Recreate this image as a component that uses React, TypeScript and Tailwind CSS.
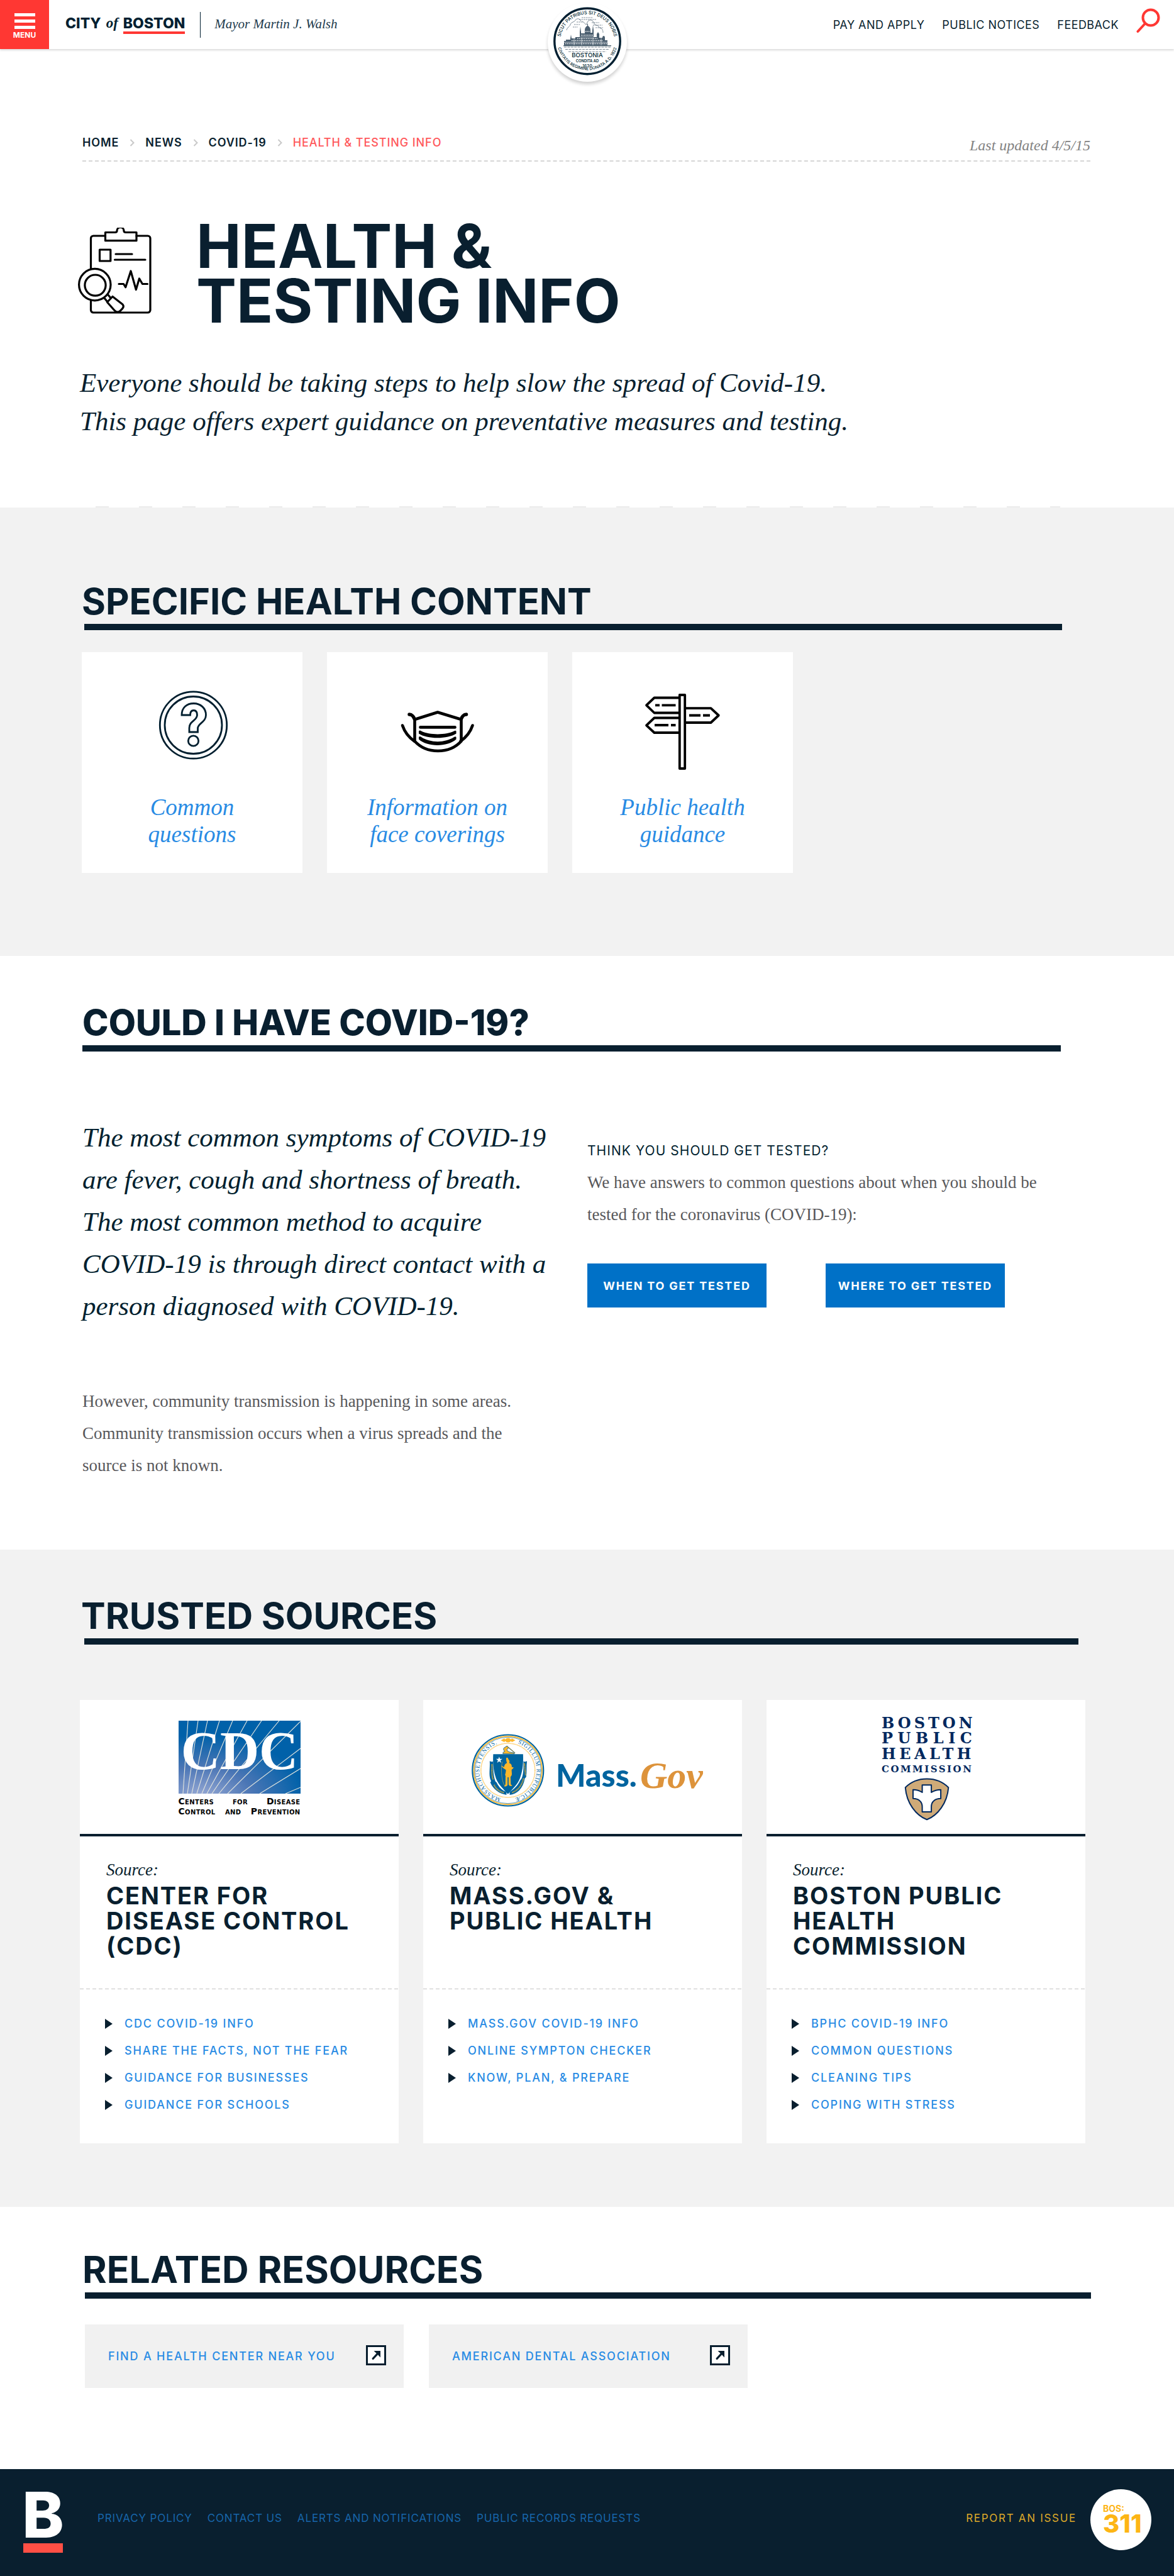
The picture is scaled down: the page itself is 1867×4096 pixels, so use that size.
import type { ReactNode } from "react";

const sans = "font-['Inter',sans-serif]";
const serif = "font-['Liberation_Serif',serif]";

/* ---------- Icons and logos ---------- */

function SearchIcon() {
  return (
    <svg viewBox="0 0 38 40" className="h-10 w-[38px]" fill="none" stroke="#ff3733" aria-hidden="true">
      <circle cx="23" cy="15" r="12.5" strokeWidth="4" />
      <path d="M13.5 25 2.5 37" strokeWidth="4" strokeLinecap="round" />
    </svg>
  );
}

function CitySeal() {
  return (
    <svg viewBox="0 0 126 126" className="size-[126px]" aria-label="City of Boston seal" role="img">
      <defs>
        <path id="sealTop" d="M20 61.5a43 43 0 0 1 86 0" />
        <path id="sealBottom" d="M14.5 59a48.5 48.5 0 0 0 97 0" />
      </defs>
      <circle cx="63" cy="61.5" r="52.2" fill="#fff" stroke="#011f31" strokeWidth="3.4" />
      <g fill="#011f31" fontFamily="Inter, sans-serif" fontWeight="500" textAnchor="middle">
        <text fontSize="7.4">
          <textPath href="#sealTop" startOffset="50%">SICUT PATRIBUS SIT DEUS NOBIS</textPath>
        </text>
        <text fontSize="6.6">
          <textPath href="#sealBottom" startOffset="50%">CIVITATIS REGIMINE DONATA A.D. 1822</textPath>
        </text>
        <text x="63" y="87" fontSize="9.5">BOSTONIA</text>
        <text x="63" y="94.500" fontSize="5.800" fontWeight="600">CONDITA AD</text>
        <text x="63" y="102.500" fontSize="6.600">1630</text>
      </g>
      <g fill="none" stroke="#5b6d7c" strokeWidth="0.8">
        <path d="M30 44c1-5 5-5 6-9 2-5 6-3 8-7 3-4 8-2 9 2M55 30c3 1 4 5 7 5 1-6 5-9 9-6 3 2 2 6 6 7 4 0 4 4 7 5 3 0 4 4 4 7" />
        <path d="M54 24h18M50 27h27M46 31h10M70 32h12M42 35h9M72 36h15M40 39h8M76 40h12" strokeDasharray="2.5 1" />
        <path d="M26 71h74M28 74.5h70M33 78h60" strokeDasharray="4 1.4" />
      </g>
      <g fill="#4a5e6f">
        <path d="M51 55V47l1-9 1 9v2h6v-5c0-4 2-6 4-7v-3h1v3c2 1 4 3 4 7v4h3v-4l1-8 1 8v11z" />
        <path d="M36 61v-4l1-6 1 6h6v-2h34v-5l2-3 2 3v6h5c0-4 4-4 4 0v4h4v8H26v-7h3v-2h7z" />
      </g>
      <g stroke="#fff" strokeWidth="1.300" fill="none">
        <path d="M28 65.500h70M38 60.500h50M47 57.300h32" strokeDasharray="1.500 1.300" />
        <path d="M53 52h20M60 46h7" strokeDasharray="1.300 1.200" />
        <path d="M26 63.200h72M52 54.800h22" strokeWidth="0.600" />
        <path d="M42 57v11M54 56v12M72 56v12M85 56v12" strokeWidth="0.600" />
      </g>
      <path d="M25 68.800h76" stroke="#011f31" strokeWidth="1" />
    </svg>
  );
}

function ClipboardIcon() {
  return (
    <svg
      viewBox="0 0 117 137"
      className="mt-[14px] h-[137px] w-[117px] shrink-0"
      fill="none"
      stroke="#000"
      strokeWidth="3.2"
      strokeLinecap="round"
      strokeLinejoin="round"
      aria-hidden="true"
    >
      <path d="M43 13H24.500a4 4 0 0 0-4 4v48M20.500 116v15a4 4 0 0 0 4 4H111a4 4 0 0 0 4-4V17a4 4 0 0 0-4-4H93" />
      <path d="M43.500 7.500H59c2 0 3-1 3-2.500a5.500 5.500 0 0 1 11 0c0 1.500 1 2.500 3 2.500h17v13.200H43.500z" />
      <path d="M34.500 35h17.300v18H34.500zM60 42h26M58.500 51H107" />
      <path d="M65 89.500h7.500l3.200 5.200L84 69l8.300 29.500 5.200-17.500 5 8.500h8" />
      <circle cx="26.800" cy="90.600" r="25.200" />
      <circle cx="27.500" cy="91.600" r="16.600" />
      <path d="m48 107 4.500 5.200M42 112l4.500 5.500M55 109.500 46.500 118.500 58 131.500c3 3.600 6.500 3.200 9 1 4.500-4 7-7 4-10.500z" />
    </svg>
  );
}

function QuestionIcon() {
  return (
    <svg viewBox="0 0 130 130" className="size-[130px]" fill="none" stroke="#011f2f" strokeWidth="2.800" aria-hidden="true">
      <circle cx="66.500" cy="56" r="53.200" />
      <circle cx="66.500" cy="56" r="45.500" />
      <path d="M48 40c0-12 8-18.500 19-18.500S86.500 29 86.500 40C86.500 51.500 73.500 53 73.500 61v6H60v-6.500C60 49 72.500 49 72.500 40c0-5.500-2.500-7.500-5.500-7.500-4 0-5.500 3-5.500 7.500z" />
      <circle cx="66.500" cy="81" r="8.200" />
    </svg>
  );
}

function MaskIcon() {
  return (
    <svg viewBox="0 0 130 130" className="size-[130px]" aria-hidden="true">
      <g fill="none" stroke="#000" strokeWidth="4.600" strokeLinecap="round" strokeLinejoin="round">
        <path d="M28.500 47 65 35.500 102.500 47v34.500C93 92 81 97 65.500 97S38 92 28.500 81.500z" />
        <path d="M28 46c-1-3-4-7-8-7M102.500 46c1-3 4-7 8-7" strokeWidth="5.500" />
        <path d="M9 56.500c3 9 9 18 19 25M120.500 56.500c-3 9-9 18-19 25" />
        <path d="M37.500 59.400h55" />
      </g>
      <path d="M35 65.500c1-1.500 3-1 4 0 14 6.500 38 6.500 52 0 1.500-1 3-1 3.500 0v4C81 78.500 48 78.500 35 69.500zM35 75c1-1.500 3-1 4 0 14 9.500 38 9.500 52 0 1.500-1 3-1 3.500 0v3.500C81 91 48 91 35 78.500z" />
    </svg>
  );
}

function SignpostIcon() {
  return (
    <svg viewBox="0 0 130 130" className="size-[130px]" fill="none" stroke="#000" strokeWidth="3.800" aria-hidden="true">
      <path d="M59 12.500H19.500L7 24.300 19.500 36.500H59M59 44.500H19.500L7 56.300 19.500 68H59M69 29.200h40.500L121.800 40.500 109.500 52H69" strokeLinejoin="round" />
      <path d="M59.800 8h8.400v117h-8.400z" strokeLinejoin="round" />
      <path d="M21 24.300h7M31.500 24.300h22M20 56h22M46 56h7.500M75 40.500h18M97 40.500h11" />
    </svg>
  );
}

const cdcRays: number[][] = [
  [15, 0, 7, 116], [31, 0, 14, 116], [46, 0, 21, 116], [65, 0, 29, 116], [86, 0, 37, 116], [109, 0, 45, 116],
  [132, 0, 53, 116], [160, 0, 64, 116], [194, 1, 78, 116], [194, 44, 99, 116], [194, 76, 129, 116], [194, 106, 170, 116],
];

function CdcLogo() {
  return (
    <div className="w-[194px]">
      <svg viewBox="0 0 194 116" className="block w-full" role="img" aria-label="CDC">
        <defs>
          <radialGradient id="cdcGlow" cx="0.18" cy="1.05" r="0.85">
            <stop offset="0" stopColor="#9aabd6" />
            <stop offset="0.5" stopColor="#4b76b5" />
            <stop offset="1" stopColor="#0061a9" />
          </radialGradient>
        </defs>
        <rect width="194" height="116" fill="url(#cdcGlow)" />
        <g stroke="#e4e6de" strokeWidth="1.100">
          {cdcRays.map(([x1, y1, x2, y2]) => (
            <line key={`${x1}-${y1}`} x1={x1} y1={y1} x2={x2} y2={y2} />
          ))}
        </g>
        <text x="97" y="77" textAnchor="middle" fontFamily="Liberation Serif, serif" fontWeight="700" fontSize="86" fill="#fff">
          CDC
        </text>
      </svg>
      <div className="pt-1 font-['DejaVu_Sans',sans-serif] text-[14px] leading-[16px] font-bold tracking-wide whitespace-nowrap text-black [font-variant-caps:small-caps]">
        <div className="flex justify-between">
          <span>Centers</span>
          <span>for</span>
          <span>Disease</span>
        </div>
        <div className="flex justify-between">
          <span>Control</span>
          <span>and</span>
          <span>Prevention</span>
        </div>
      </div>
    </div>
  );
}

function MassSeal() {
  return (
    <svg viewBox="30 53 540 540" className="size-[116px]" role="img" aria-label="Massachusetts seal">
      <defs>
        <path id="massRing" d="M299 535a212 212 0 0 1 0-424a212 212 0 0 1 0 424" />
        <path id="massRingRight" d="M299 111a212 212 0 0 1 0 424a212 212 0 0 1-212-212" />
      </defs>
      <circle cx="299" cy="323" r="263" fill="#fff" stroke="#00649f" strokeWidth="10" />
      <circle cx="299" cy="323" r="252" fill="none" stroke="#fdb72b" strokeWidth="8" />
      <circle cx="299" cy="323" r="245" fill="none" stroke="#00649f" strokeWidth="3" />
      <circle cx="299" cy="323" r="200" fill="none" stroke="#fdc65a" strokeWidth="7" strokeDasharray="7 3" />
      <g fontFamily="Liberation Serif, serif" fontSize="42" fill="#00649f" letterSpacing="4">
        <text>
          <textPath href="#massRingRight" startOffset="74">SIGILLUM REIPUBLICÆ</textPath>
        </text>
        <text>
          <textPath href="#massRing" startOffset="54">MASSACHUSETTENSIS.</textPath>
        </text>
      </g>
      <path d="M246 101l26-14 8 8c4-16 36-16 40 0l8-8 26 14-26 12-8-8c-6 14-34 14-40 0l-8 8z" fill="#fdb72b" />
      <path d="M262 200c-2-12 8-18 14-16-8-10-14-18-6-28l22-14 12 14-14 16 16 14 40 8v8z" fill="#fdb72b" stroke="#00649f" strokeWidth="4" />
      <path d="M290 143l62 52" stroke="#6d7a55" strokeWidth="6" />
      <path d="M190 203h221c2 60 0 120-24 180-20 48-50 72-88 116-38-44-68-68-88-116-22-60-24-120-21-180z" fill="#00649f" />
      <path d="M164 254c14 6 22 6 26 0 0 50-2 100 16 150l10 10c14 34 44 60 72 68v22c-50-6-100-40-120-92 6-4 8-10 4-14-18-40-4-90-8-144zM440 254c-14 6-22 6-26 0 0 50 2 90-14 130l-12 16c-14 34-44 64-76 82v22c54-6 98-44 112-122l10-10c6-36 0-80 6-118z" fill="#00649f" />
      <g fill="none" stroke="#fdb72b" strokeWidth="10" strokeDasharray="5 4">
        <path d="M181 278c0 40-4 80 8 112M196 430c14 30 38 50 74 58M420 270c4 30 6 60 10 92M414 382c-10 50-40 90-86 106" />
      </g>
      <path d="M234 222l6 16h18l-15 11 6 18-15-11-15 11 6-18-14-11h17z" fill="#fff" />
      <path d="M284 232c8-8 18-2 18 10 10 8 10 18 6 26 14 4 20 14 20 32l12 0-2 8-12 10c0 16 4 30 0 42l-8 12 2 56 10 6-2 4h-16l-8-10 0-54-8 0 0 60-12 8h-14l10-14c2-30 0-50 2-62l-4-10c4-14 6-24 6-36l-20-14-14-14 2-4 18 12c2-16 8-28 22-32-6-14-6-24-6-36z" fill="#fdb72b" />
      <path d="M258 258c-12 40-10 140 18 182" fill="none" stroke="#d3a94b" strokeWidth="3" />
    </svg>
  );
}

function MassGovLogo() {
  return (
    <div className="flex items-start pt-[21px] pl-[14px]">
      <MassSeal />
      <svg viewBox="0 0 240 116" className="ml-3 h-[116px] w-60" role="img" aria-label="Mass.Gov">
        <text x="6" y="84" fontFamily="Lato, sans-serif" fontWeight="900" fontSize="50" fill="#00649f">
          Mass.
        </text>
        <text x="140" y="86" fontFamily="Liberation Serif, serif" fontStyle="italic" fontWeight="700" fontSize="60" fill="#dd933b">
          Gov
        </text>
      </svg>
    </div>
  );
}

function BphcLogo() {
  return (
    <svg viewBox="0 -8 160 174" className="mt-[-14px] ml-[14px] h-[174px] w-40" role="img" aria-label="Boston Public Health Commission">
      <g fontFamily="DejaVu Serif, serif" fontWeight="700" fontSize="24" fill="#00285e">
        <text x="2" y="18" letterSpacing="5">BOSTON</text>
        <text x="2" y="42" letterSpacing="7.500">PUBLIC</text>
        <text x="2" y="67" letterSpacing="5.500">HEALTH</text>
        <text x="2" y="88" fontSize="15" letterSpacing="2.500">COMMISSION</text>
      </g>
      <g transform="translate(3 0)" stroke="#00285e" strokeWidth="2" strokeLinejoin="round">
        <path d="M36.800 112.300C48 101 60 98.600 71 98.600s23 2.400 34.300 13.700c-2 25-17 44-34.300 51-17.300-7-32.300-26-34.200-51z" fill="#cfaa78" />
        <path d="M63.600 108.300h14.500v11.600c5-3 10-4.100 15-4.100v13.900c-9 0-15 5-15 13v8.300H63.600v-8.300c0-8-6-13-14.600-13v-13.900c5 0 10 1.100 14.600 4.100z" fill="#fff" />
      </g>
    </svg>
  );
}

function ExternalIcon() {
  return (
    <svg viewBox="0 0 32 32" className="mb-1 size-8 shrink-0" aria-hidden="true">
      <rect x="1.500" y="1.500" width="29" height="29" fill="#fff" stroke="#091f2f" strokeWidth="3" />
      <path d="M12.500 9H23v10.500l-4-4.200-6.700 7.200a1.500 1.500 0 0 1-2.300-2.300l6.700-7.200z" fill="#091f2f" />
    </svg>
  );
}

/* ---------- Shared parts ---------- */

function SectionHeading({
  children,
  textClass = "text-[58px] font-bold",
  barClass = "",
}: {
  children: ReactNode;
  textClass?: string;
  barClass?: string;
}) {
  return (
    <>
      <h2 className={`${sans} leading-[60px] whitespace-nowrap text-[#091f2f] ${textClass}`}>{children}</h2>
      <div className={`mt-1.5 h-2.5 bg-[#091f2f] ${barClass}`} />
    </>
  );
}

function TopicCard({ icon, first, second }: { icon: ReactNode; first: string; second: string }) {
  return (
    <a href="#" className="flex h-[351px] w-[351px] flex-col items-center bg-white pt-[60px]">
      {icon}
      <span className={`${serif} mt-[35px] text-center text-[37px] leading-[43px] text-[#288be4] italic`}>
        {first}
        <br />
        {second}
      </span>
    </a>
  );
}

type Source = { logo: ReactNode; title: string[]; links: string[] };

function SourceCard({ logo, title, links }: Source) {
  return (
    <article className="flex flex-col bg-white pb-10">
      <div className="flex h-[217px] justify-center border-b-4 border-[#091f2f] pt-[33px]">{logo}</div>
      <div className="min-h-[242px] pt-[38px] pl-[42px]">
        <p className={`${serif} text-[27px] leading-[30px] text-[#091f2f] italic`}>Source:</p>
        <h3 className={`${sans} mt-1.5 text-[38px] leading-10 font-bold tracking-wider whitespace-nowrap text-[#091f2f]`}>
          {title.map((line) => (
            <span key={line} className="block">
              {line}
            </span>
          ))}
        </h3>
      </div>
      <div className="h-px bg-[repeating-linear-gradient(90deg,#c4c4c4_0_6px,#ffffff_6px_10px)]" />
      <ul className="pt-[33px] pl-10">
        {links.map((link) => (
          <li key={link} className="flex h-[43px] items-center gap-[19px]">
            <svg viewBox="0 0 12 16" className="h-4 w-3" aria-hidden="true">
              <path d="M0 0 12 8 0 16z" fill="#091f2f" />
            </svg>
            <a href="#" className={`${sans} text-[18px] font-medium tracking-widest whitespace-nowrap text-[#288be4]`}>
              {link}
            </a>
          </li>
        ))}
      </ul>
    </article>
  );
}

const sources: Source[] = [
  {
    logo: <CdcLogo />,
    title: ["CENTER FOR", "DISEASE CONTROL", "(CDC)"],
    links: ["CDC COVID-19 INFO", "SHARE THE FACTS, NOT THE FEAR", "GUIDANCE FOR BUSINESSES", "GUIDANCE FOR SCHOOLS"],
  },
  {
    logo: <MassGovLogo />,
    title: ["MASS.GOV &", "PUBLIC HEALTH"],
    links: ["MASS.GOV COVID-19 INFO", "ONLINE SYMPTON CHECKER", "KNOW, PLAN, & PREPARE"],
  },
  {
    logo: <BphcLogo />,
    title: ["BOSTON PUBLIC", "HEALTH", "COMMISSION"],
    links: ["BPHC COVID-19 INFO", "COMMON QUESTIONS", "CLEANING TIPS", "COPING WITH STRESS"],
  },
];

const crumbs = ["HOME", "NEWS", "COVID-19"];
const resources = ["FIND A HEALTH CENTER NEAR YOU", "AMERICAN DENTAL ASSOCIATION"];
const footerLinks = ["PRIVACY POLICY", "CONTACT US", "ALERTS AND NOTIFICATIONS", "PUBLIC RECORDS REQUESTS"];

/* ---------- Page ---------- */

function Header() {
  return (
    <header className="relative flex h-[78px] items-center bg-white shadow-[0_2px_3px_rgba(0,0,0,0.15)]">
      <button type="button" className="flex h-full w-[78px] flex-col items-center bg-[#ff3733] pt-[21px] text-white">
        <span className="h-[5px] w-[33px] bg-white" />
        <span className="mt-[5px] h-[5px] w-[33px] bg-white" />
        <span className="mt-[5px] h-[5px] w-[33px] bg-white" />
        <span className={`${sans} mt-[3px] text-[12px] leading-[14px] font-bold`}>MENU</span>
      </button>
      <a href="#" className={`${sans} ml-[26px] flex text-[23px] leading-[26px] font-extrabold text-[#011f31]`}>
        <span>CITY</span>
        <span className={`${serif} mx-2 font-bold italic`}>of</span>
        <span className="border-b-4 border-[#ff3733]">BOSTON</span>
      </a>
      <span className="ml-6 h-[41px] w-px bg-[#011f31]" />
      <span className={`${serif} ml-[22px] text-[21px] text-[#20394c] italic`}>Mayor Martin J. Walsh</span>
      <nav className={`${sans} ml-auto flex items-center gap-7 text-[18px] tracking-wide whitespace-nowrap text-[#091f2f]`}>
        <a href="#">PAY AND APPLY</a>
        <a href="#">PUBLIC NOTICES</a>
        <a href="#">FEEDBACK</a>
      </nav>
      <button type="button" aria-label="Search" className="mr-[22px] mb-3 ml-7">
        <SearchIcon />
      </button>
      <a href="#" className="absolute top-1 left-1/2 -translate-x-1/2 rounded-full bg-white shadow-[0_4px_5px_rgba(0,0,0,0.18)]">
        <CitySeal />
      </a>
    </header>
  );
}

export default function App() {
  return (
    <div className="min-h-screen bg-white">
      <Header />

      <main>
        <section className="pr-[133px] pl-[124px]">
          <div className="ml-[7px] flex items-start justify-between border-b-2 border-dashed border-[#d6d6d6] pt-[134px] pb-[9px]">
            <nav aria-label="Breadcrumb" className={`${sans} flex items-center gap-[17px] text-[18px] leading-[30px] tracking-wider text-[#091f2f]`}>
              {crumbs.map((crumb) => (
                <span key={crumb} className="flex items-center gap-[17px] font-semibold">
                  <a href="#">{crumb}</a>
                  <svg viewBox="0 0 8 12" className="h-3 w-2" fill="none" stroke="#c9c9c9" strokeWidth="2" aria-hidden="true">
                    <path d="m1.500 1 5 5-5 5" />
                  </svg>
                </span>
              ))}
              <span className="font-medium text-[#ff585b]">HEALTH &amp; TESTING INFO</span>
            </nav>
            <p className={`${serif} pt-1 text-[24px] leading-[30px] text-[#828282] italic`}>Last updated 4/5/15</p>
          </div>

          <div className="mt-[91px] flex items-start gap-[71px]">
            <ClipboardIcon />
            <h1 className={`${sans} text-[96px] leading-[87px] font-bold text-[#091f2f]`}>
              HEALTH &amp;
              <br />
              TESTING INFO
            </h1>
          </div>
          <p className={`${serif} mt-14 ml-[3px] text-[43px] leading-[61px] text-[#091f2f] italic`}>
            Everyone should be taking steps to help slow the spread of Covid-19.
            <br />
            This page offers expert guidance on preventative measures and testing.
          </p>
          <div className="mt-[105px] mr-12 ml-7 h-0.5 bg-[repeating-linear-gradient(90deg,#ebebeb_0_21px,#ffffff_21px_69px)]" />
        </section>

        <section className="bg-[#f2f2f2] pt-[119px] pr-[178px] pb-[132px] pl-[130px]">
          <SectionHeading barClass="ml-1">SPECIFIC HEALTH CONTENT</SectionHeading>
          <div className="mt-[35px] flex gap-[39px]">
            <TopicCard icon={<QuestionIcon />} first="Common" second="questions" />
            <TopicCard icon={<MaskIcon />} first="Information on" second="face coverings" />
            <TopicCard icon={<SignpostIcon />} first="Public health" second="guidance" />
          </div>
        </section>

        <section className="pt-[76px] pr-[180px] pb-[108px] pl-[131px]">
          <SectionHeading textClass="text-[56px] font-extrabold">COULD I HAVE COVID-19?</SectionHeading>
          <div className="mt-[103px] grid grid-cols-2 gap-[50px]">
            <div>
              <p className={`${serif} text-[43px] leading-[67px] whitespace-nowrap text-[#011f2f] italic`}>
                The most common symptoms of COVID-19
                <br />
                are fever, cough and shortness of breath.
                <br />
                The most common method to acquire
                <br />
                COVID-19 is through direct contact with a
                <br />
                person diagnosed with COVID-19.
              </p>
              <p className={`${serif} mt-[93px] text-[27px] leading-[51px] whitespace-nowrap text-[#58585b]`}>
                However, community transmission is happening in some areas.
                <br />
                Community transmission occurs when a virus spreads and the
                <br />
                source is not known.
              </p>
            </div>
            <div className="pt-10">
              <h3 className={`${sans} text-[21px] leading-[30px] tracking-wider text-[#011f2f]`}>THINK YOU SHOULD GET TESTED?</h3>
              <p className={`${serif} mt-2.5 text-[27px] leading-[51px] whitespace-nowrap text-[#58585b]`}>
                We have answers to common questions about when you should be
                <br />
                tested for the coronavirus (COVID-19):
              </p>
              <div className={`${sans} mt-[52px] flex gap-[94px] text-[18px] font-bold whitespace-nowrap text-white`}>
                <button type="button" className="h-[70px] w-[285px] bg-[#0071c7] tracking-widest">WHEN TO GET TESTED</button>
                <button type="button" className="h-[70px] w-[285px] bg-[#0071c7] tracking-widest">WHERE TO GET TESTED</button>
              </div>
            </div>
          </div>
        </section>

        <section className="bg-[#f2f2f2] pt-[75px] pr-[141px] pb-[101px] pl-[127px]">
          <SectionHeading textClass="ml-[2px] text-[58px] font-bold" barClass="mr-[11px] ml-[7px]">
            TRUSTED SOURCES
          </SectionHeading>
          <div className="mt-[88px] grid grid-cols-3 gap-[39px]">
            {sources.map((source) => (
              <SourceCard key={source.title[0]} {...source} />
            ))}
          </div>
        </section>

        <section className="pt-[70px] pr-[132px] pb-[129px] pl-[135px]">
          <SectionHeading textClass="ml-[-4px] text-[59px] font-bold">RELATED RESOURCES</SectionHeading>
          <div className="mt-[41px] flex gap-10">
            {resources.map((resource) => (
              <a
                key={resource}
                href="#"
                className={`${sans} flex h-[101px] w-[507px] items-center justify-between bg-[#f1f1f1] pr-7 pl-[37px] text-[18px] font-medium tracking-widest whitespace-nowrap text-[#288be4]`}
              >
                {resource}
                <ExternalIcon />
              </a>
            ))}
          </div>
        </section>
      </main>

      <footer className={`${sans} flex h-[170px] items-start bg-[#091f2f] pr-9 pl-[37px] text-[17px] leading-[30px] tracking-wider whitespace-nowrap`}>
        <a href="#" aria-label="Boston" className="flex w-[63px] flex-col items-center pt-9">
          <span className="text-[100px] leading-[73px] font-extrabold tracking-normal text-white">B</span>
          <span className="mt-[9px] h-[15px] w-full bg-[#ff4f45]" />
        </a>
        <nav className="ml-[55px] flex gap-6 pt-[63px] text-[#1765aa]">
          {footerLinks.map((link) => (
            <a key={link} href="#">
              {link}
            </a>
          ))}
        </nav>
        <a href="#" className="ml-auto pt-[63px] tracking-widest text-[#dca829]">
          REPORT AN ISSUE
        </a>
        <a href="#" className="mt-8 ml-[22px] flex size-[97px] flex-col justify-center rounded-full bg-white pl-5 tracking-normal text-[#fdb515]">
          <span className="text-[14px] leading-3 font-bold">BOS:</span>
          <span className="text-[40px] leading-9 font-extrabold">311</span>
        </a>
      </footer>
    </div>
  );
}
